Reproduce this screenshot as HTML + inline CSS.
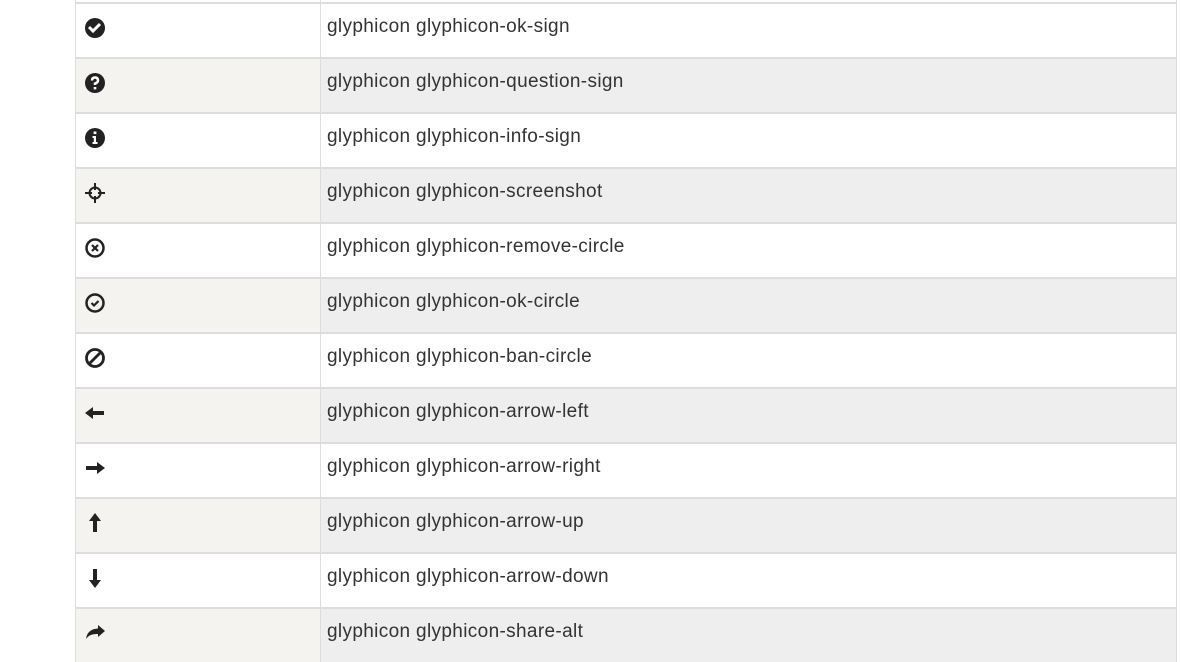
<!DOCTYPE html><html><head><style>
body{margin:0;width:1181px;height:662px;overflow:hidden;background:#fff;font-family:"Liberation Sans",sans-serif}
.r{position:absolute;left:75px;width:1100px;height:53px;border-top:2px solid #ddd;border-left:1px solid #ddd;border-right:1px solid #ddd}
.c1{position:absolute;left:0;top:0;width:244px;height:53px;border-right:1px solid #ddd}
.t{position:absolute;left:251px;top:12px;font-size:19px;color:#333;letter-spacing:0.35px}
.o .c1{background:#f4f3ef}.o{background:#eee}
svg{position:absolute;left:8px;top:13px}
</style></head><body>
<div class="r" style="top:-51px"><div class="c1"></div></div>
<div class="r" style="top:2px"><div class="c1"><svg width="22" height="22" viewBox="0 0 22 22"><circle cx="11" cy="11" r="10" fill="#222"/><path d="M5 10l4 4 7-7" stroke="#fff" stroke-width="3" fill="none"/></svg></div><div class="t">glyphicon glyphicon-ok-sign</div></div>
<div class="r o" style="top:57px"><div class="c1"><svg width="22" height="22" viewBox="0 0 22 22"><circle cx="11" cy="11" r="10" fill="#222"/><path d="M8 8.5q0-3 3-3t3 3q0 2-3 3v1.5" stroke="#fff" stroke-width="2.5" fill="none"/><rect x="9.7" y="15" width="2.6" height="2.4" fill="#fff"/></svg></div><div class="t">glyphicon glyphicon-question-sign</div></div>
<div class="r" style="top:112px"><div class="c1"><svg width="22" height="22" viewBox="0 0 22 22"><circle cx="11" cy="11" r="10" fill="#222"/><rect x="9.6" y="4.5" width="2.8" height="2.6" fill="#fff"/><path d="M8.5 9h3.5v6h1.5v2h-5v-2h1.3v-4h-1.3z" fill="#fff"/></svg></div><div class="t">glyphicon glyphicon-info-sign</div></div>
<div class="r o" style="top:167px"><div class="c1"><svg width="22" height="22" viewBox="0 0 22 22"><circle cx="11" cy="11" r="5.5" stroke="#222" stroke-width="2" fill="none"/><path d="M11 1v7M11 14v7M1 11h7M14 11h7" stroke="#222" stroke-width="2"/></svg></div><div class="t">glyphicon glyphicon-screenshot</div></div>
<div class="r" style="top:222px"><div class="c1"><svg width="22" height="22" viewBox="0 0 22 22"><circle cx="11" cy="11" r="8.5" stroke="#222" stroke-width="2.5" fill="none"/><path d="M8 8l6 6M14 8l-6 6" stroke="#222" stroke-width="2.2"/></svg></div><div class="t">glyphicon glyphicon-remove-circle</div></div>
<div class="r o" style="top:277px"><div class="c1"><svg width="22" height="22" viewBox="0 0 22 22"><circle cx="11" cy="11" r="8.5" stroke="#222" stroke-width="2.5" fill="none"/><path d="M7.5 11l2.5 2.5 4.5-4.5" stroke="#222" stroke-width="2.2" fill="none"/></svg></div><div class="t">glyphicon glyphicon-ok-circle</div></div>
<div class="r" style="top:332px"><div class="c1"><svg width="22" height="22" viewBox="0 0 22 22"><circle cx="11" cy="11" r="8.5" stroke="#222" stroke-width="2.8" fill="none"/><path d="M5 17L17 5" stroke="#222" stroke-width="2.8"/></svg></div><div class="t">glyphicon glyphicon-ban-circle</div></div>
<div class="r o" style="top:387px"><div class="c1"><svg width="22" height="22" viewBox="0 0 22 22"><path d="M1 11l8-6v4h11v4H9v4z" fill="#222"/></svg></div><div class="t">glyphicon glyphicon-arrow-left</div></div>
<div class="r" style="top:442px"><div class="c1"><svg width="22" height="22" viewBox="0 0 22 22"><path d="M21 11l-8-6v4H2v4h11v4z" fill="#222"/></svg></div><div class="t">glyphicon glyphicon-arrow-right</div></div>
<div class="r o" style="top:497px"><div class="c1"><svg width="22" height="22" viewBox="0 0 22 22"><path d="M11 1l-6 8h4v11h4V9h4z" fill="#222"/></svg></div><div class="t">glyphicon glyphicon-arrow-up</div></div>
<div class="r" style="top:552px"><div class="c1"><svg width="22" height="22" viewBox="0 0 22 22"><path d="M11 21l-6-8h4V2h4v11h4z" fill="#222"/></svg></div><div class="t">glyphicon glyphicon-arrow-down</div></div>
<div class="r o" style="top:607px"><div class="c1"><svg width="22" height="22" viewBox="0 0 22 22"><path d="M21 9l-7-6v3.5C7 7 3 10 2 17c3-4 6-5 12-5v3z" fill="#222"/></svg></div><div class="t">glyphicon glyphicon-share-alt</div></div>
</body></html>
